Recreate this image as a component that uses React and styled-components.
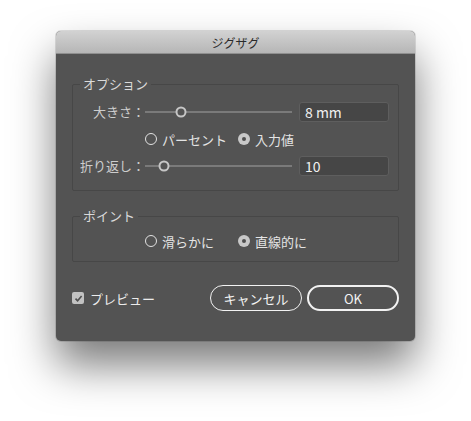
import React from 'react'
import styled, { createGlobalStyle } from 'styled-components'

const GlobalStyle = createGlobalStyle`
  html, body {
    margin: 0;
    padding: 0;
    background: #ffffff;
    min-height: 100vh;
  }
  body {
    font-family: "Noto Sans CJK JP", "Noto Sans", "Liberation Sans", sans-serif;
  }
  #root {
    min-height: 100vh;
    overflow: hidden;
  }
`

const App = () => {
  return (
    <>
      <GlobalStyle />
      <Page>
        <Window>
          <TitleBar>ジグザグ</TitleBar>
          <Body>
            <Group $pt={17} $pb={14}>
              <Legend>オプション</Legend>
              <FormGrid>
                <FieldLabel>大きさ：</FieldLabel>
                <Slider value={24.5} />
                <NumberInput>8 mm</NumberInput>

                <RadioRow>
                  <Radio label="パーセント" />
                  <Radio label="入力値" checked />
                </RadioRow>

                <FieldLabel>折り返し：</FieldLabel>
                <Slider value={13} />
                <NumberInput>10</NumberInput>
              </FormGrid>
            </Group>

            <Group $pt={14} $pb={10} $mt={25}>
              <Legend>ポイント</Legend>
              <FormGrid>
                <RadioRow>
                  <Radio label="滑らかに" />
                  <Radio label="直線的に" checked />
                </RadioRow>
              </FormGrid>
            </Group>

            <Footer>
              <CheckLabel>
                <CheckBox>
                  <svg width="9" height="9" viewBox="0 0 9 9">
                    <path d="M1.5 4.6 L3.6 6.8 L7.6 2" fill="none" stroke="#4e4e4e" strokeWidth="1.6" />
                  </svg>
                </CheckBox>
                プレビュー
              </CheckLabel>
              <Buttons>
                <Button>キャンセル</Button>
                <Button $primary>OK</Button>
              </Buttons>
            </Footer>
          </Body>
        </Window>
      </Page>
    </>
  )
}

const Slider = ({ value }) => (
  <Track>
    <Knob style={{ left: `${value}%` }} />
  </Track>
)

const Radio = ({ label, checked }) => (
  <RadioItem>
    <RadioDot $checked={checked} />
    {label}
  </RadioItem>
)

const Page = styled.div`
  height: 421px;
  padding: 31px 0 0 56px;
  box-sizing: border-box;
`

const Window = styled.div`
  width: 359px;
  height: 310px;
  background: #535353;
  border-radius: 5px;
  overflow: hidden;
  box-shadow: 0 24px 44px rgba(0, 0, 0, 0.52), 0 0 0 1px rgba(0, 0, 0, 0.12);
`

const TitleBar = styled.div`
  height: 23px;
  display: flex;
  align-items: center;
  justify-content: center;
  background: linear-gradient(#d2d2d2, #b6b6b6);
  border-bottom: 1px solid #8f8f8f;
  box-sizing: border-box;
  font-size: 12px;
  color: #2a2a2a;
`

const Body = styled.div`
  padding: 30px 16px 0;
`

const Group = styled.div`
  position: relative;
  border: 1px solid #474747;
  border-radius: 2px;
  margin-top: ${p => p.$mt || 0}px;
  padding: ${p => p.$pt}px 0 ${p => p.$pb}px;
`

const Legend = styled.span`
  position: absolute;
  top: -9px;
  left: 7px;
  padding: 0 3px;
  background: #535353;
  font-size: 13px;
  line-height: 16px;
  color: #dadada;
`

const FormGrid = styled.div`
  display: grid;
  grid-template-columns: 72px 147px 97px;
  row-gap: 7px;
  align-items: center;
`

const FieldLabel = styled.div`
  font-size: 13px;
  line-height: 20px;
  color: #cdcdcd;
  text-align: right;
  white-space: nowrap;
`

const Track = styled.div`
  position: relative;
  height: 2px;
  background: #7a7a7a;
`

const Knob = styled.div`
  position: absolute;
  top: 50%;
  width: 11px;
  height: 11px;
  box-sizing: border-box;
  border: 2px solid #c6c6c6;
  border-radius: 50%;
  background: #535353;
  transform: translate(-50%, -50%);
`

const NumberInput = styled.div`
  height: 20px;
  margin-left: 7px;
  box-sizing: border-box;
  border: 1px solid #5e5e5e;
  border-radius: 3px;
  background: #464646;
  padding: 0 5px;
  font-size: 14px;
  line-height: 18px;
  color: #f0f0f0;
`

const RadioRow = styled.div`
  grid-column: 2 / 4;
  display: grid;
  grid-template-columns: 93px auto;
  height: 20px;
  align-items: center;
`

const RadioItem = styled.div`
  display: flex;
  align-items: center;
  gap: 5px;
  font-size: 13px;
  color: #e4e4e4;
  white-space: nowrap;
`

const RadioDot = styled.span`
  width: 12px;
  height: 12px;
  box-sizing: border-box;
  border-radius: 50%;
  display: flex;
  align-items: center;
  justify-content: center;
  border: ${p => (p.$checked ? 'none' : '1.5px solid #e2e2e2')};
  background: ${p => (p.$checked ? '#c8c8c8' : 'transparent')};

  &::after {
    content: '';
    display: ${p => (p.$checked ? 'block' : 'none')};
    width: 4px;
    height: 4px;
    border-radius: 50%;
    background: #4e4e4e;
  }
`

const Footer = styled.div`
  display: flex;
  align-items: center;
  justify-content: space-between;
  margin-top: 23px;
  height: 26px;
`

const CheckLabel = styled.div`
  display: flex;
  align-items: center;
  gap: 6px;
  font-size: 13px;
  color: #ececec;
`

const CheckBox = styled.span`
  width: 12px;
  height: 12px;
  border-radius: 2px;
  background: #c2c2c2;
  display: flex;
  align-items: center;
  justify-content: center;
`

const Buttons = styled.div`
  display: flex;
  gap: 5px;
`

const Button = styled.button`
  width: 92px;
  height: 26px;
  box-sizing: border-box;
  border-radius: 13px;
  border: ${p => (p.$primary ? '2px' : '1px')} solid #f2f2f2;
  background: transparent;
  color: #f4f4f4;
  font-family: inherit;
  font-size: 13px;
  padding: 0;
  cursor: pointer;
`

export default App
